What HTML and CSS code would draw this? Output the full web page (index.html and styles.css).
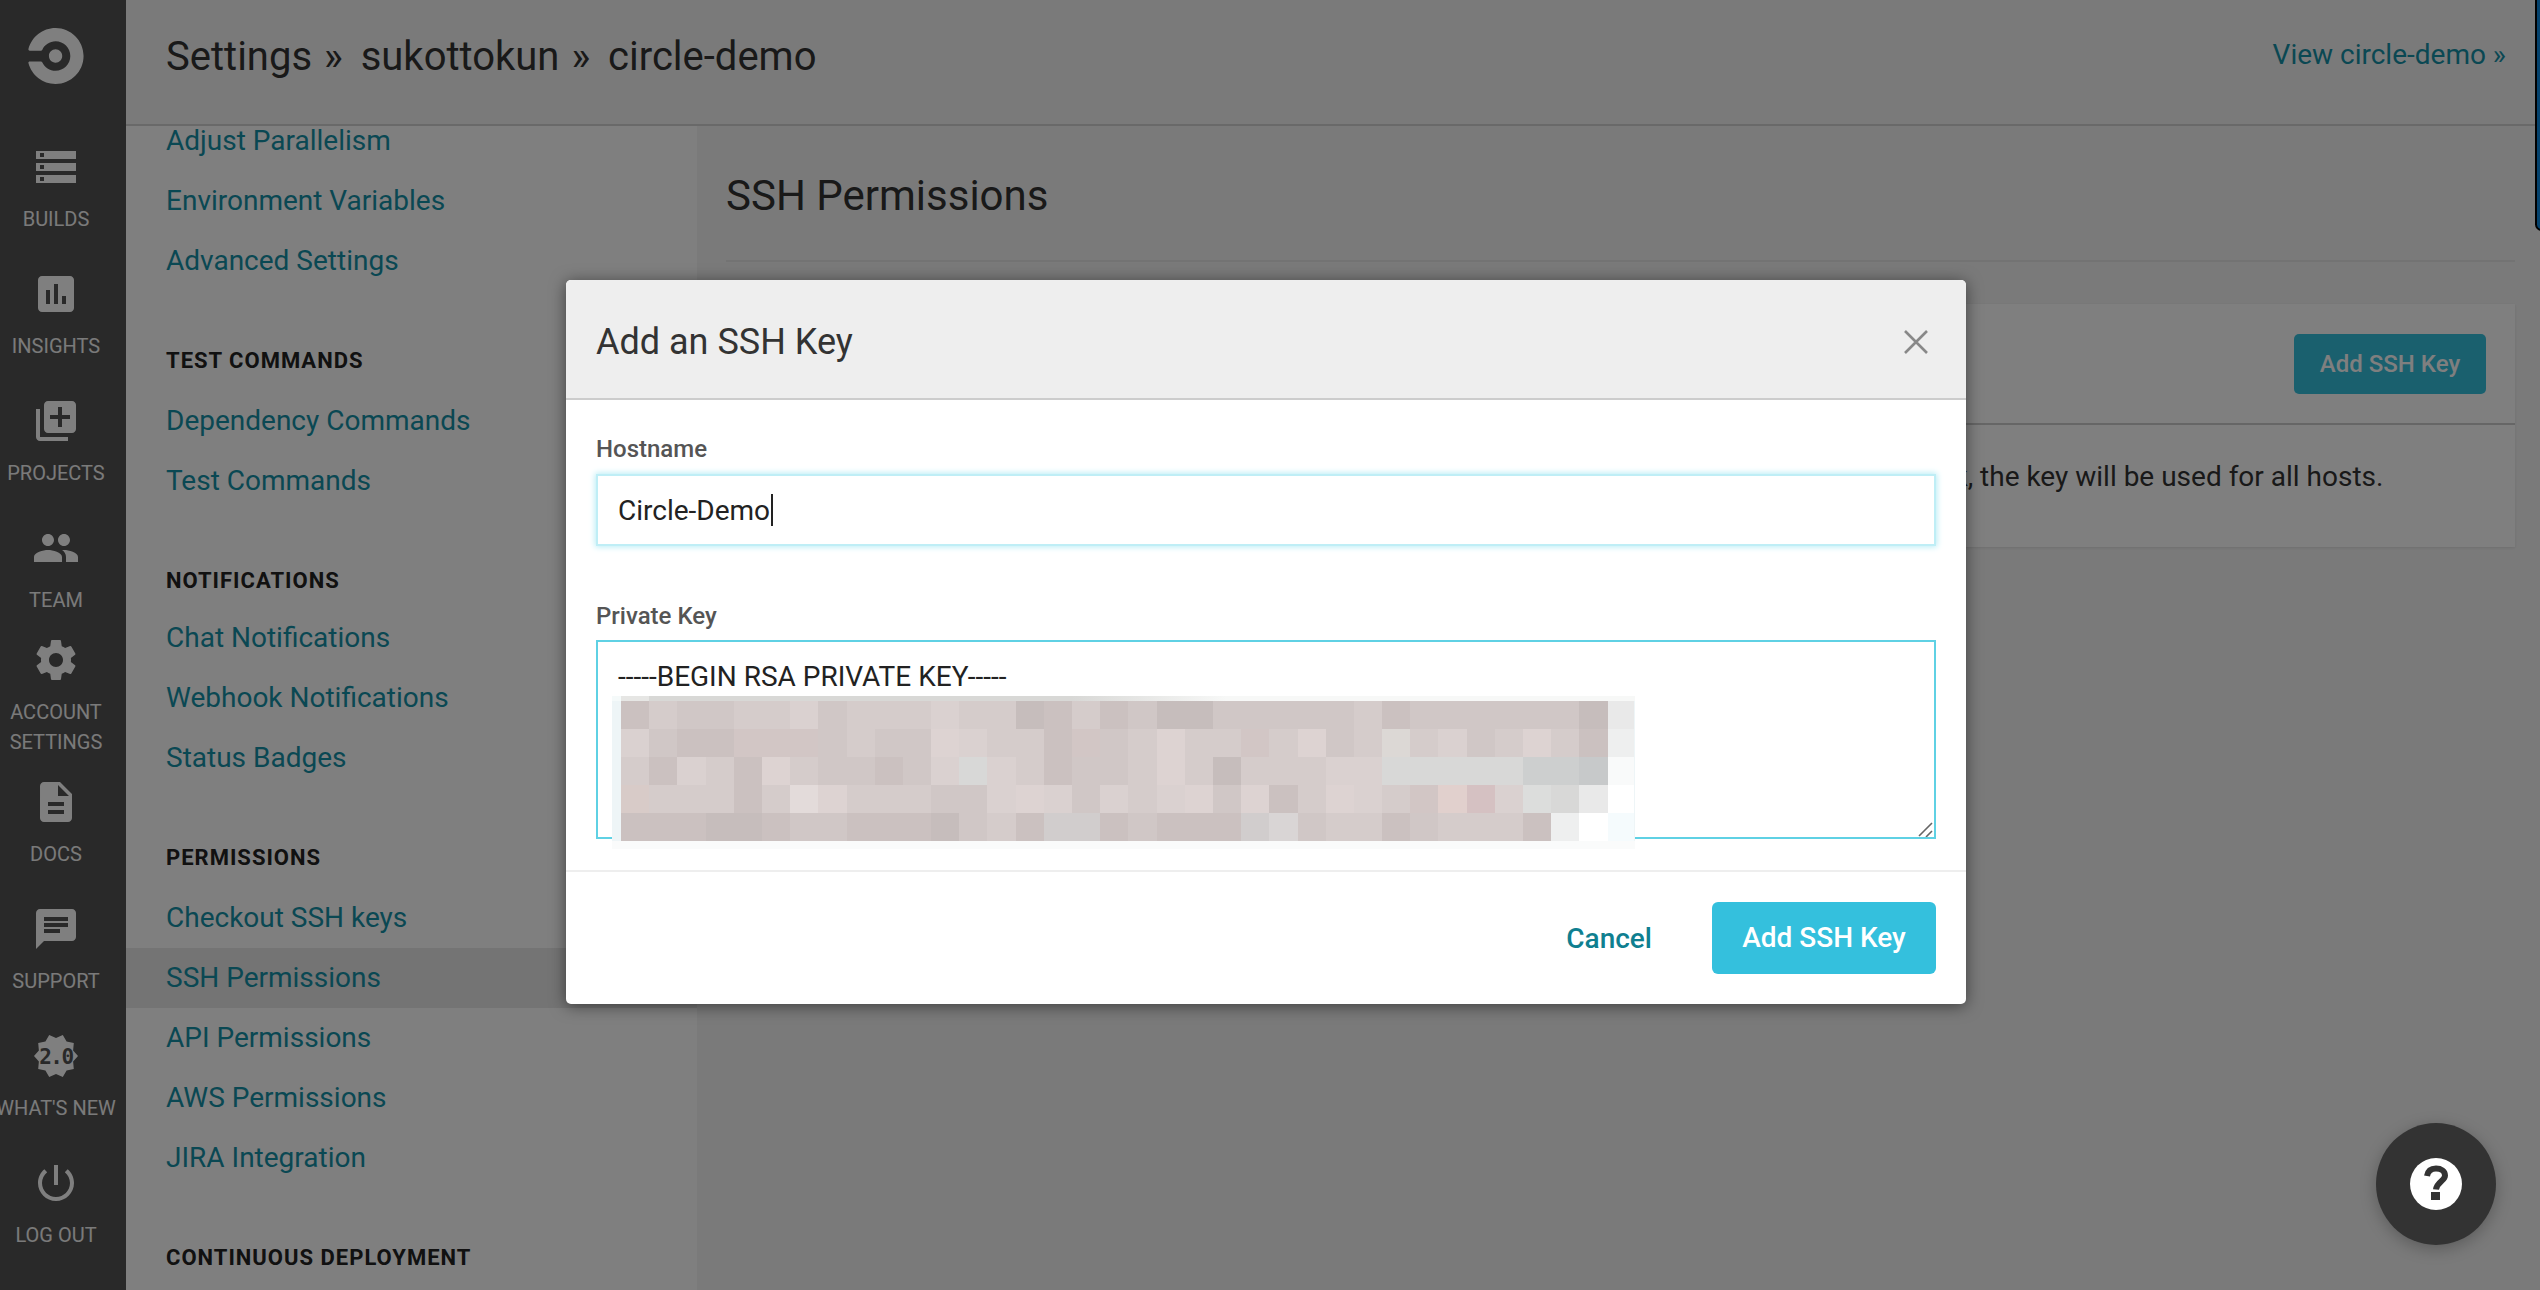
FILE: index.html
```html
<!DOCTYPE html>
<html lang="en">
<head>
    <meta charset="UTF-8">
    <title>SSH Permissions - circle-demo</title>
    <link rel="stylesheet" href="styles.css">
</head>
<body>

<aside class="sidebar">
    <a class="logo" href="#">
        <svg viewBox="0 0 103.8 105.2" width="56" height="56"><path d="M38.6 52.6c0-6.9 5.6-12.5 12.5-12.5s12.5 5.6 12.5 12.5-5.6 12.5-12.5 12.5c-6.9.1-12.5-5.6-12.5-12.5zM51.1 0C26.5 0 5.9 16.8.1 39.6c0 .2-.1.3-.1.5 0 1.4 1.1 2.5 2.5 2.5h21.2c1 0 1.9-.6 2.3-1.5 4.4-9.5 14-16.1 25.1-16.1 15.3 0 27.7 12.4 27.7 27.7S66.4 80.4 51.1 80.4c-11.1 0-20.7-6.6-25.1-16.1-.4-.9-1.3-1.5-2.3-1.5H2.5c-1.4 0-2.5 1.1-2.5 2.5 0 .2 0 .3.1.5C5.9 88.4 26.5 105.2 51.1 105.2c29 0 52.6-23.6 52.6-52.6S80.1 0 51.1 0z"/></svg>
    </a>
    <a class="side-item" href="#">
        <svg viewBox="0 0 24 24"><path d="M2 20h20v-4H2v4zm2-3h2v2H4v-2zM2 4v4h20V4H2zm4 3H4V5h2v2zm-4 7h20v-4H2v4zm2-3h2v2H4v-2z"/></svg>
        <span>Builds</span>
    </a>
    <a class="side-item" href="#">
        <svg viewBox="0 0 24 24"><path d="M19 3H5c-1.1 0-2 .9-2 2v14c0 1.1.9 2 2 2h14c1.1 0 2-.9 2-2V5c0-1.1-.9-2-2-2zM9 17H7v-7h2v7zm4 0h-2V7h2v10zm4 0h-2v-4h2v4z"/></svg>
        <span>Insights</span>
    </a>
    <a class="side-item" href="#">
        <svg viewBox="0 0 24 24"><path d="M4 6H2v14c0 1.1.9 2 2 2h14v-2H4V6zm16-4H8c-1.1 0-2 .9-2 2v12c0 1.1.9 2 2 2h12c1.1 0 2-.9 2-2V4c0-1.1-.9-2-2-2zm-1 9h-4v4h-2v-4H9V9h4V5h2v4h4v2z"/></svg>
        <span>Projects</span>
    </a>
    <a class="side-item" href="#">
        <svg viewBox="0 0 24 24"><path d="M16 11c1.66 0 2.99-1.34 2.99-3S17.66 5 16 5c-1.66 0-3 1.34-3 3s1.34 3 3 3zm-8 0c1.66 0 2.99-1.34 2.99-3S9.66 5 8 5C6.34 5 5 6.34 5 8s1.34 3 3 3zm0 2c-2.33 0-7 1.17-7 3.5V19h14v-2.5c0-2.33-4.67-3.5-7-3.5zm8 0c-.29 0-.62.02-.97.05 1.16.84 1.97 1.97 1.97 3.45V19h6v-2.5c0-2.33-4.67-3.5-7-3.5z"/></svg>
        <span>Team</span>
    </a>
    <a class="side-item" href="#">
        <svg viewBox="0 0 24 24"><path d="M19.43 12.98c.04-.32.07-.64.07-.98s-.03-.66-.07-.98l2.11-1.65c.19-.15.24-.42.12-.64l-2-3.46c-.12-.22-.39-.3-.61-.22l-2.49 1c-.52-.4-1.08-.73-1.69-.98l-.38-2.65C14.46 2.18 14.25 2 14 2h-4c-.25 0-.46.18-.49.42l-.38 2.65c-.61.25-1.17.59-1.69.98l-2.49-1c-.23-.09-.49 0-.61.22l-2 3.46c-.13.22-.07.49.12.64l2.11 1.65c-.04.32-.07.65-.07.98s.03.66.07.98l-2.11 1.65c-.19.15-.24.42-.12.64l2 3.46c.12.22.39.3.61.22l2.49-1c.52.4 1.08.73 1.69.98l.38 2.65c.03.24.24.42.49.42h4c.25 0 .46-.18.49-.42l.38-2.65c.61-.25 1.17-.59 1.69-.98l2.49 1c.23.09.49 0 .61-.22l2-3.46c.12-.22.07-.49-.12-.64l-2.11-1.65zM12 15.5c-1.93 0-3.5-1.57-3.5-3.5s1.57-3.5 3.5-3.5 3.5 1.57 3.5 3.5-1.57 3.5-3.5 3.5z"/></svg>
        <span>Account<br>Settings</span>
    </a>
    <a class="side-item" href="#">
        <svg viewBox="0 0 24 24"><path d="M14 2H6c-1.1 0-1.99.9-1.99 2L4 20c0 1.1.89 2 1.99 2H18c1.1 0 2-.9 2-2V8l-6-6zm2 16H8v-2h8v2zm0-4H8v-2h8v2zm-3-5V3.5L18.5 9H13z"/></svg>
        <span>Docs</span>
    </a>
    <a class="side-item" href="#">
        <svg viewBox="0 0 24 24"><path d="M20 2H4c-1.1 0-1.99.9-1.99 2L2 22l4-4h14c1.1 0 2-.9 2-2V4c0-1.1-.9-2-2-2zM6 9h12v2H6V9zm8 5H6v-2h8v2zm4-6H6V6h12v2z"/></svg>
        <span>Support</span>
    </a>
    <a class="side-item" href="#">
        <svg viewBox="0 0 24 24"><path d="M23 12l-2.44-2.78.34-3.68-3.61-.82-1.89-3.18L12 3 8.6 1.54 6.71 4.72l-3.61.81.34 3.68L1 12l2.44 2.78-.34 3.69 3.61.82 1.89 3.18L12 21l3.4 1.46 1.89-3.18 3.61-.82-.34-3.68L23 12z"/><text class="badge-text" x="12" y="15.8">2.0</text></svg>
        <span>What's New</span>
    </a>
    <a class="side-item" href="#">
        <svg viewBox="0 0 24 24"><path d="M13 3h-2v10h2V3zm4.83 2.17l-1.42 1.42C17.99 7.86 19 9.81 19 12c0 3.87-3.13 7-7 7s-7-3.13-7-7c0-2.19 1.01-4.14 2.58-5.42L6.17 5.17C4.23 6.82 3 9.26 3 12c0 4.97 4.03 9 9 9s9-4.03 9-9c0-2.74-1.23-5.18-3.17-6.83z"/></svg>
        <span>Log Out</span>
    </a>
</aside>

<div class="page">
    <header class="topbar">
        <h1>Settings <span class="sep">»</span> sukottokun <span class="sep">»</span> circle-demo</h1>
        <a class="view-link" href="#">View circle-demo »</a>
    </header>

    <div class="columns">
        <nav class="settings-nav">
            <div class="nav-scroll">
                <a class="nav-link" href="#">Adjust Parallelism</a>
                <a class="nav-link" href="#">Environment Variables</a>
                <a class="nav-link" href="#">Advanced Settings</a>

                <div class="nav-title">Test Commands</div>
                <a class="nav-link" href="#">Dependency Commands</a>
                <a class="nav-link" href="#">Test Commands</a>

                <div class="nav-title tight">Notifications</div>
                <a class="nav-link" href="#">Chat Notifications</a>
                <a class="nav-link" href="#">Webhook Notifications</a>
                <a class="nav-link" href="#">Status Badges</a>

                <div class="nav-title">Permissions</div>
                <a class="nav-link" href="#">Checkout SSH keys</a>
                <a class="nav-link active" href="#">SSH Permissions</a>
                <a class="nav-link" href="#">API Permissions</a>
                <a class="nav-link" href="#">AWS Permissions</a>
                <a class="nav-link" href="#">JIRA Integration</a>

                <div class="nav-title">Continuous Deployment</div>
            </div>
        </nav>

        <main class="content">
            <h2>SSH Permissions</h2>
            <section class="card">
                <div class="card-head">
                    <a class="card-btn" href="#">Add SSH Key</a>
                </div>
                <p>Add keys to the build VMs that you need to SSH into other hosts. If you leave the hostname blank, the key will be used for all hosts.</p>
            </section>
        </main>
    </div>
</div>

<div class="edge-tab"></div>
<div class="backdrop"></div>

<div class="modal">
    <div class="modal-head">
        <h3>Add an SSH Key</h3>
        <svg class="close" viewBox="0 0 24 24"><path d="M1 1L23 23M23 1L1 23"/></svg>
    </div>
    <div class="modal-body">
        <label>Hostname</label>
        <div class="field">Circle-Demo<span class="caret"></span></div>

        <label class="second">Private Key</label>
        <div class="key-wrap">
            <textarea class="key-input">-----BEGIN RSA PRIVATE KEY-----</textarea>
            <div class="pixels" id="pixels"></div>
            <svg class="grip" viewBox="0 0 15 15"><path d="M14 1L1 14M14 9L8 15"/></svg>
        </div>
    </div>
    <div class="modal-foot">
        <a class="cancel" href="#">Cancel</a>
        <a class="primary" href="#">Add SSH Key</a>
    </div>
</div>

<a class="help" href="#">
    <svg viewBox="0 0 52 52" width="52" height="52">
        <circle cx="26" cy="26" r="26" fill="#fff"/>
        <path class="help-mark" d="M17 18C18 12 22 10.5 26 10.5C31 10.5 35 13 35 17.5C35 23 27 23.5 26 31.5"/>
        <rect x="21" y="34" width="9" height="8" fill="#333"/>
    </svg>
</a>

<script src="pixels.js"></script>
</body>
</html>
```

FILE: styles.css
```css
* {
    box-sizing: border-box;
}
html, body {
    margin: 0;
    height: 100%;
    overflow: hidden;
}
body {
    display: flex;
    font-family: Roboto, "Liberation Sans", sans-serif;
    font-size: 28px;
    color: #333;
    background-color: #f5f5f5;
}
a {
    color: #1590a6;
    text-decoration: none;
}

/* left bar */
.sidebar {
    flex: 0 0 126px;
    height: 100%;
    padding-right: 14px;
    overflow: hidden;
    background-color: #525252;
}
.logo {
    display: flex;
    align-items: center;
    justify-content: center;
    height: 125px;
    padding-bottom: 13px;
    fill: #fff;
}
.side-item {
    display: flex;
    flex-direction: column;
    align-items: center;
    justify-content: center;
    gap: 13px;
    height: 127px;
    color: #f4f4f4;
    fill: #fff;
    font-size: 20px;
    line-height: 30px;
    text-align: center;
    text-transform: uppercase;
    white-space: nowrap;
}
.side-item svg {
    width: 48px;
    height: 48px;
    flex: none;
}
.badge-text {
    font-family: "DejaVu Sans Mono", monospace;
    font-size: 10.5px;
    font-weight: bold;
    letter-spacing: -0.7px;
    text-anchor: middle;
    fill: #525252;
}

/* top bar */
.page {
    flex: 1;
    min-width: 0;
    display: flex;
    flex-direction: column;
}
.topbar {
    flex: 0 0 126px;
    display: flex;
    align-items: center;
    justify-content: space-between;
    padding: 0 34px 12px 40px;
    border-bottom: 2px solid #d2d2d2;
}
.topbar h1 {
    margin: 0;
    font-size: 40px;
    font-weight: 400;
}
.topbar .sep {
    margin: 0 8px 0 2px;
}
.view-link {
    margin-bottom: 3px;
}

/* settings nav */
.columns {
    flex: 1;
    display: flex;
    min-height: 0;
}
.settings-nav {
    flex: 0 0 571px;
    overflow: hidden;
    background-color: #fff;
}
.nav-scroll {
    margin-top: -15px;
}
.nav-link {
    display: block;
    padding: 16px 0 16px 40px;
    line-height: 28px;
}
.nav-link.active {
    background-color: #e8e8e8;
}
.nav-title {
    height: 60px;
    margin-top: 40px;
    padding-left: 40px;
    color: #222;
    font-size: 22px;
    font-weight: 700;
    line-height: 60px;
    letter-spacing: 1px;
    text-transform: uppercase;
}
.nav-title.tight {
    margin-bottom: -3px;
}

/* right side */
.content {
    flex: 1;
    padding: 0 25px 0 29px;
}
.content h2 {
    margin: 0;
    padding: 46px 0 40px;
    font-size: 42px;
    font-weight: 400;
    line-height: 48px;
    border-bottom: 2px solid #e6e6e6;
}
.card {
    margin-top: 42px;
    background-color: #fff;
    box-shadow: 0 1px 3px rgba(0,0,0,0.1);
}
.card-head {
    display: flex;
    justify-content: flex-end;
    padding: 30px 29px 29px;
    border-bottom: 2px solid #ccc;
}
.card-btn {
    width: 192px;
    height: 60px;
    border-radius: 5px;
    background-color: #34c0dd;
    color: #fff;
    font-size: 24px;
    font-weight: 500;
    line-height: 60px;
    text-align: center;
}
.card p {
    margin: 0;
    height: 122px;
    padding: 35px 30px 0 42px;
    line-height: 34px;
}

/* things on top of the page */
.edge-tab {
    position: absolute;
    top: -6px;
    right: -8px;
    width: 13px;
    height: 237px;
    border: 2px solid #000;
    border-radius: 8px;
    background-color: #0b86dd;
}
.backdrop {
    position: absolute;
    inset: 0;
    background-color: rgba(0,0,0,0.5);
}
.modal {
    position: absolute;
    left: 566px;
    top: 280px;
    width: 1400px;
    height: 724px;
    border-radius: 5px;
    background-color: #fff;
    box-shadow: 0 2px 16px rgba(0,0,0,0.5);
}
.modal-head {
    display: flex;
    align-items: center;
    justify-content: space-between;
    height: 120px;
    padding: 5px 38px 0 30px;
    background-color: #eee;
    border-bottom: 2px solid #ccc;
    border-radius: 5px 5px 0 0;
}
.modal-head h3 {
    margin: 0;
    font-size: 36px;
    font-weight: 400;
}
.close {
    width: 24px;
    height: 24px;
    fill: none;
    stroke: #888;
    stroke-width: 2.6;
}
.modal-body {
    padding: 34px 30px 0 30px;
}
label {
    display: block;
    height: 30px;
    margin-bottom: 10px;
    color: #555;
    font-size: 24px;
    font-weight: 500;
    line-height: 30px;
}
label.second {
    margin-top: 55px;
    margin-bottom: 9px;
}
.field {
    display: flex;
    align-items: center;
    height: 72px;
    padding-left: 20px;
    border: 2px solid #bfeef6;
    box-shadow: 0 0 6px 1px #b8edf6;
    color: #222;
}
.caret {
    width: 2px;
    height: 32px;
    margin-left: 1px;
    background-color: #222;
}
.key-wrap {
    position: relative;
}
.key-input {
    display: block;
    width: 100%;
    height: 199px;
    padding: 17px 20px;
    border: 2px solid #5fd1e4;
    outline: none;
    resize: none;
    color: #222;
    font-family: inherit;
    font-size: 28px;
    line-height: 36px;
}
.pixels {
    position: absolute;
    left: 16px;
    top: 56px;
    display: grid;
    grid-template-columns: repeat(35, 28.2px) 26px;
    grid-template-rows: repeat(5, 28px);
    width: 1023px;
    height: 153px;
    padding: 5px 0 8px 9px;
    background:
        linear-gradient(90deg, #f5fafa 0 9px, #e6e6e4 9px 37px, #d8d8d6 37px 45%, #f7f8f7 60%) top / 100% 5px no-repeat,
        #eef5f7;
}
.pixels::after {
    content: "";
    position: absolute;
    left: 0;
    right: 0;
    bottom: 0;
    height: 8px;
    background-color: #fafbfb;
}
.grip {
    position: absolute;
    right: 3px;
    bottom: 2px;
    width: 15px;
    height: 15px;
    fill: none;
    stroke: #666;
    stroke-width: 1.6;
}
.modal-foot {
    display: flex;
    align-items: center;
    justify-content: flex-end;
    gap: 60px;
    position: absolute;
    left: 0;
    right: 0;
    bottom: 0;
    height: 134px;
    padding: 0 30px;
    border-top: 2px solid #eee;
}
.cancel {
    color: #0f7f90;
    font-weight: 500;
}
.primary {
    width: 224px;
    height: 72px;
    border-radius: 6px;
    background-color: #34c0dd;
    color: #fff;
    font-weight: 500;
    line-height: 72px;
    text-align: center;
}
.help {
    position: absolute;
    left: 2376px;
    top: 1123px;
    display: flex;
    align-items: center;
    justify-content: center;
    width: 120px;
    height: 122px;
    border-radius: 50%;
    background-color: #333;
    box-shadow: 0 4px 16px rgba(0,0,0,0.25);
}
.help-mark {
    fill: none;
    stroke: #333;
    stroke-width: 6;
}
```

FILE: pixels.js
```js
// blurred out key, one letter per block
var colors = {
    a: "#cbc1c0", b: "#d0c7c6", c: "#d5cccb", d: "#dad1d0", e: "#ddd3d2",
    f: "#d2c6c5", g: "#c6bdbc", h: "#e3dbda", i: "#d8d8d7", j: "#cdcfcf",
    k: "#e9e9e9", l: "#eeefef", m: "#f9fafa", n: "#ffffff", p: "#e1d0cd",
    q: "#d5c1c2", r: "#dcdddc", s: "#d1cdcd", t: "#d9d5d5", u: "#f5fbfd",
    v: "#dcd8d5", w: "#c7c9ca", x: "#d8cbc8"
};
var rows = [
    "acbbccdbcccdccgac" + "abggbbbbbcabbbbbbg" + "k",
    "dbaafffbcbbedccaf" + "bceccfcebcvcdbceca" + "l",
    "cadcaecbbabdidcab" + "bcecgcccddiiiiijjw" + "m",
    "xcccacheccc" + "bbdedb" + "dcdebeacedcfpqdrik" + "n",
    "aaaggabbaaagbcass" + "abaaastbccabcccaln" + "u"
];
var box = document.getElementById("pixels");
rows.forEach(function (row) {
    row.split("").forEach(function (letter) {
        var cell = document.createElement("div");
        cell.style.backgroundColor = colors[letter];
        box.appendChild(cell);
    });
});
```
